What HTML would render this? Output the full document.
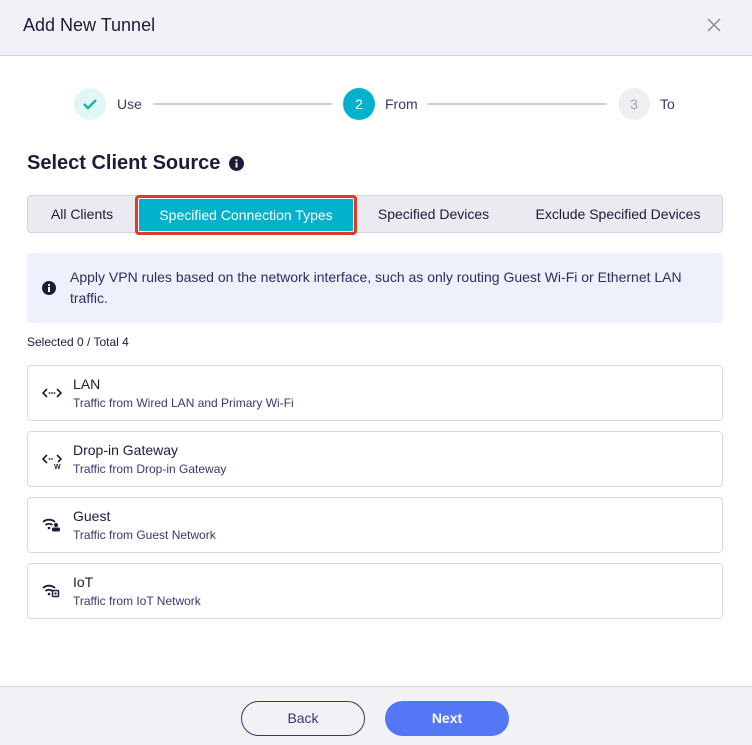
<!DOCTYPE html>
<html><head><meta charset="utf-8"><style>
*{box-sizing:border-box;margin:0;padding:0}
body{width:752px;height:745px;position:relative;background:#fff;font-family:"Liberation Sans",sans-serif;overflow:hidden;color:#1d1b3a}
.a{position:absolute}
.hdr{left:0;top:0;width:752px;height:56px;background:#f2f1f6;border-bottom:1px solid #d6d5dd}
.circ{width:32px;height:32px;border-radius:50%;text-align:center;line-height:32px;font-size:14px}
.line{height:2px;background:#cfcfd6}
.tabs{left:27px;top:195px;width:696px;height:38px;background:#ebeaf0;border:1px solid #d4d3db;border-radius:4px}
.tab{top:0;height:36px;line-height:36px;font-size:14px;color:#1d1b3a;text-align:center}
.card{left:27px;width:696px;height:56px;border:1px solid #d9d8e0;border-radius:4px}
.card .t{position:absolute;left:45px;top:10px;font-size:14px;color:#1d1b3a}
.card .s{position:absolute;left:45px;top:30px;font-size:12px;color:#3a3670}
.card svg{position:absolute;left:14px;top:19px}
.ftr{left:0;top:686px;width:752px;height:59px;background:#f2f1f6;border-top:1px solid #d6d5dd}
.btn{top:701px;width:124px;height:35px;border-radius:18px;text-align:center;line-height:33px;font-size:14px}
</style></head><body>
<div class="a hdr"></div>
<div class="a" style="left:23px;top:15px;font-size:18px;color:#1d1b3a">Add New Tunnel</div>
<svg class="a" style="left:707px;top:18px" width="14" height="14"><path d="M1 1L13 13M13 1L1 13" stroke="#8a8a94" stroke-width="1.5"/></svg>

<div class="a circ" style="left:74px;top:88px;background:#e3f6f6"><svg width="32" height="32"><path d="M10 16l4 4 8-8" stroke="#13b5ad" stroke-width="2.5" fill="none"/></svg></div>
<div class="a" style="left:117px;top:96px;font-size:14px;color:#3a3670">Use</div>
<div class="a line" style="left:153px;top:103px;width:179px"></div>
<div class="a circ" style="left:343px;top:88px;background:#02b2cc;color:#fff">2</div>
<div class="a" style="left:385px;top:96px;font-size:14px;color:#3a3670">From</div>
<div class="a line" style="left:427px;top:103px;width:180px"></div>
<div class="a circ" style="left:618px;top:88px;background:#efeef3;color:#a3a3ad">3</div>
<div class="a" style="left:660px;top:96px;font-size:14px;color:#3a3670">To</div>

<div class="a" style="left:27px;top:152px;font-size:20px;font-weight:bold;color:#1d1b3a">Select Client Source</div>
<svg class="a" style="left:229px;top:156px" width="15" height="15"><circle cx="7.5" cy="7.5" r="7.5" fill="#1d1b3a"/><rect x="6.5" y="6.5" width="2" height="5" fill="#fff"/><circle cx="7.5" cy="4.3" r="1.1" fill="#fff"/></svg>

<div class="a tabs">
<div class="a tab" style="left:0;width:108px">All Clients</div>
<div class="a tab" style="left:328px;width:155px">Specified Devices</div>
<div class="a tab" style="left:490px;width:200px">Exclude Specified Devices</div>
</div>
<div class="a" style="left:135px;top:195px;width:222px;height:40px;border:3px solid #e23a2a;border-radius:4px;background:#02b2cc;box-shadow:inset 0 0 0 1px #fff;color:#fff;font-size:14px;text-align:center;line-height:34px">Specified Connection Types</div>

<div class="a" style="left:27px;top:253px;width:696px;height:70px;background:#edf1fc;border-radius:4px"></div>
<svg class="a" style="left:42px;top:281px" width="14" height="14"><circle cx="7" cy="7" r="7" fill="#1d1b3a"/><rect x="6" y="6" width="2" height="5" fill="#fff"/><circle cx="7" cy="4" r="1.1" fill="#fff"/></svg>
<div class="a" style="left:70px;top:267px;width:640px;font-size:14px;line-height:21px;color:#2f2c5e">Apply VPN rules based on the network interface, such as only routing Guest Wi-Fi or Ethernet LAN traffic.</div>

<div class="a" style="left:27px;top:335px;font-size:12px;color:#1d1b3a">Selected 0 / Total 4</div>

<div class="a card" style="top:365px"><svg width="20" height="16"><path d="M5 4L1 8l4 4M15 4l4 4-4 4" stroke="#1d1b3a" stroke-width="1.6" fill="none"/><circle cx="7.5" cy="8" r="0.9" fill="#1d1b3a"/><circle cx="10" cy="8" r="0.9" fill="#1d1b3a"/><circle cx="12.5" cy="8" r="0.9" fill="#1d1b3a"/></svg><div class="t">LAN</div><div class="s">Traffic from Wired LAN and Primary Wi-Fi</div></div>
<div class="a card" style="top:431px"><svg width="20" height="18"><path d="M5 4L1 8l4 4M15 4l4 4-3 3" stroke="#1d1b3a" stroke-width="1.6" fill="none"/><circle cx="7.5" cy="8" r="0.9" fill="#1d1b3a"/><circle cx="10" cy="8" r="0.9" fill="#1d1b3a"/><text x="12" y="18" font-size="7" font-weight="bold" font-family="Liberation Sans" fill="#1d1b3a">W</text></svg><div class="t">Drop-in Gateway</div><div class="s">Traffic from Drop-in Gateway</div></div>
<div class="a card" style="top:497px"><svg width="20" height="16"><path d="M1 5a9 9 0 0 1 12 0M3.5 8a5.5 5.5 0 0 1 7 0" stroke="#1d1b3a" stroke-width="1.8" fill="none"/><circle cx="7" cy="11" r="1.3" fill="#1d1b3a"/><circle cx="14" cy="8" r="2" fill="#1d1b3a"/><rect x="10" y="10.5" width="8" height="4" rx="1.5" fill="#1d1b3a"/></svg><div class="t">Guest</div><div class="s">Traffic from Guest Network</div></div>
<div class="a card" style="top:563px"><svg width="20" height="16"><path d="M1 5a9 9 0 0 1 12 0M3.5 8a5.5 5.5 0 0 1 7 0" stroke="#1d1b3a" stroke-width="1.8" fill="none"/><circle cx="7" cy="11" r="1.3" fill="#1d1b3a"/><rect x="10.5" y="7.5" width="6" height="6" rx="1" fill="none" stroke="#1d1b3a" stroke-width="1.5"/><rect x="12.5" y="9.5" width="2" height="2" fill="#1d1b3a"/></svg><div class="t">IoT</div><div class="s">Traffic from IoT Network</div></div>

<div class="a ftr"></div>
<div class="a btn" style="left:241px;border:1px solid #3a3670;color:#3a3670">Back</div>
<div class="a btn" style="left:385px;background:#5478f5;color:#fff;line-height:35px;font-weight:bold">Next</div>
</body></html>
